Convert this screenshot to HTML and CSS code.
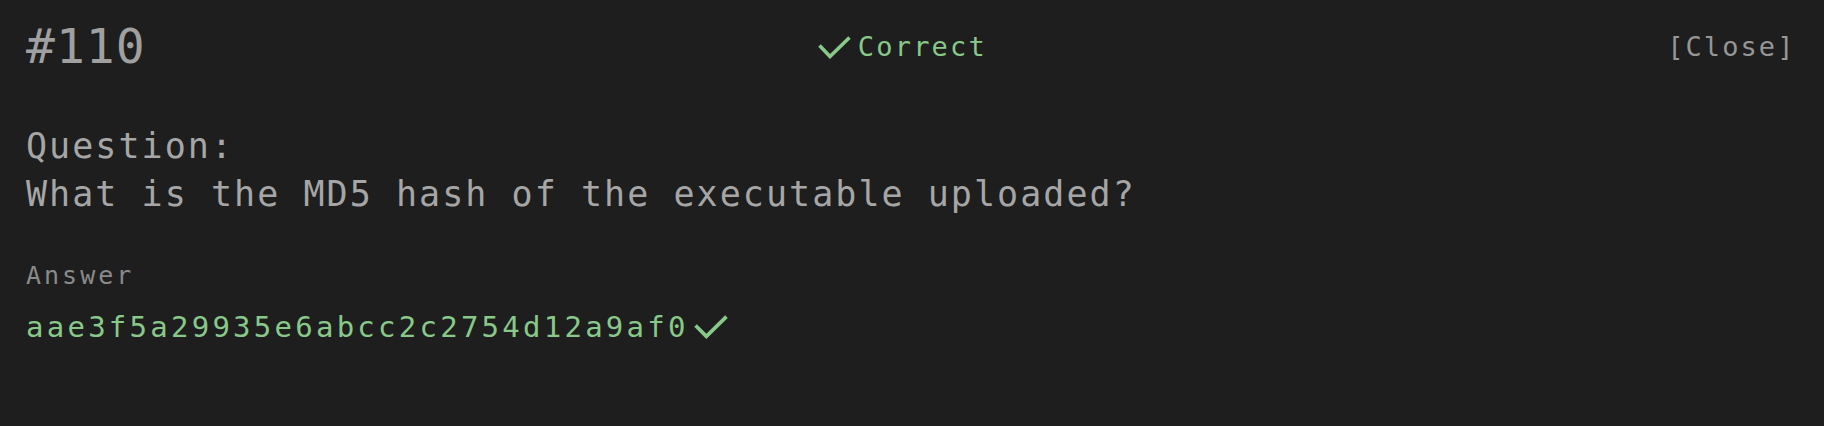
FILE: index.html
```html
<!DOCTYPE html>
<html lang="en">
<head>
<meta charset="utf-8">
<title>#110</title>
<link rel="stylesheet" href="styles.css">
</head>
<body>
<main class="panel">
  <header class="head">
    <h1 class="num">#110</h1>
    <div class="status">
      <svg class="check check-lg" viewBox="0 0 33 23" aria-hidden="true"><polyline points="1.5,9.5 12,20.5 31.5,1.5"/></svg>
      <span>Correct</span>
    </div>
    <a class="close" href="#">[Close]</a>
  </header>
  <section class="question">
    <p class="q-label">Question:</p>
    <p class="q-text">What is the MD5 hash of the executable uploaded?</p>
  </section>
  <section class="answer">
    <p class="a-label">Answer</p>
    <p class="a-value"><span>aae3f5a29935e6abcc2c2754d12a9af0</span><svg class="check check-sm" viewBox="0 0 33 23" aria-hidden="true"><polyline points="1.5,10 12,20.5 31.5,1.5"/></svg></p>
  </section>
</main>
</body>
</html>
```

FILE: styles.css
```css
html, body {
  margin: 0;
  padding: 0;
  background: #1e1e1e;
}
body {
  font-family: "DejaVu Sans Mono", "Liberation Mono", monospace;
  color: #a3a3a3;
}
.panel {
  padding: 18px 28.5px 0 26px;
}
.head {
  display: flex;
  justify-content: space-between;
  align-items: center;
}
.num {
  margin: 0;
  font-size: 48px;
  font-weight: normal;
  letter-spacing: 1px;
  color: #a0a0a0;
}
.status {
  display: flex;
  align-items: center;
  gap: 7px;
  margin-right: 8px;
  font-size: 27px;
  letter-spacing: 2.2px;
  color: #88c98a;
}
.close {
  font-size: 27px;
  letter-spacing: 2.07px;
  color: #969696;
  text-decoration: none;
}
.check {
  fill: none;
  stroke: #88c98a;
  stroke-width: 3.6;
  stroke-linecap: butt;
  stroke-linejoin: miter;
}
.check-lg {
  width: 33px;
  height: 23px;
  margin-top: 2px;
}
.question {
  margin-top: 48px;
}
.q-label, .q-text {
  margin: 0;
  font-size: 35px;
  line-height: 48px;
  letter-spacing: 2.05px;
  color: #a6a6a6;
}
.answer {
  margin-top: 43px;
}
.a-label {
  margin: 0;
  font-size: 25px;
  letter-spacing: 3px;
  color: #8a8a8a;
}
.a-value {
  margin: 20px 0 0;
  display: flex;
  align-items: center;
  gap: 5px;
  font-size: 29px;
  letter-spacing: 3.25px;
  color: #88c98a;
}
.check-sm {
  width: 34px;
  height: 24px;
}
```
